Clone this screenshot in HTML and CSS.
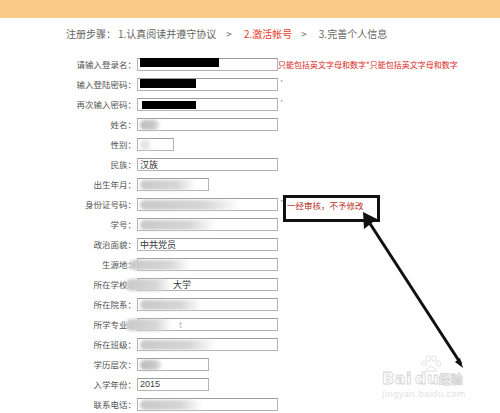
FILE: index.html
```html
<!DOCTYPE html>
<html lang="zh-CN">
<head>
<meta charset="utf-8">
<title>注册步骤</title>
<link rel="stylesheet" href="styles.css">
</head>
<body>
<div class="topbar"></div>
<div class="steps">
  <span class="step-title">注册步骤：</span>
  <span>1.认真阅读并遵守协议</span>
  <span class="sep">&gt;</span>
  <span class="cur">2.激活帐号</span>
  <span class="sep">&gt;</span>
  <span>3.完善个人信息</span>
</div>
<div class="form">
  <div class="row"><span class="label">请输入登录名：</span><span class="field"><i class="black b1"></i></span><span class="msg">只能包括英文字母和数字*只能包括英文字母和数字</span></div>
  <div class="row"><span class="label">输入登陆密码：</span><span class="field"><i class="black b2"></i></span><span class="star">*</span></div>
  <div class="row"><span class="label">再次输入密码：</span><span class="field"><i class="black b3"></i></span><span class="star">*</span></div>
  <div class="row"><span class="label">姓名：</span><span class="field"><i class="blur dark w20"></i></span></div>
  <div class="row"><span class="label">性别：</span><span class="field tiny"><i class="blur light w12"></i></span></div>
  <div class="row"><span class="label">民族：</span><span class="field">汉族</span></div>
  <div class="row"><span class="label">出生年月：</span><span class="field short"><i class="blur w56"></i></span></div>
  <div class="row"><span class="label">身份证号码：</span><span class="field"><i class="blur w100"></i></span><span class="star">*</span></div>
  <div class="row"><span class="label">学号：</span><span class="field"><i class="blur w76"></i></span></div>
  <div class="row"><span class="label">政治面貌：</span><span class="field">中共党员</span></div>
  <div class="row"><span class="label">生源地：</span><span class="field"><i class="blur over w62"></i></span></div>
  <div class="row"><span class="label">所在学校：</span><span class="field"><i class="blur over2 w46"></i><span class="after-blur">大学</span></span></div>
  <div class="row"><span class="label">所在院系：</span><span class="field"><i class="blur w62"></i></span></div>
  <div class="row"><span class="label">所学专业：</span><span class="field"><i class="blur over2 w46"></i><span class="after-blur faint">t</span></span></div>
  <div class="row"><span class="label">所在班级：</span><span class="field"><i class="blur w76"></i></span></div>
  <div class="row"><span class="label">学历层次：</span><span class="field short"><i class="blur dark w22"></i></span></div>
  <div class="row"><span class="label">入学年份：</span><span class="field short num">2015</span></div>
  <div class="row"><span class="label">联系电话：</span><span class="field"><i class="blur w62"></i></span></div>
</div>

<div class="callout">一经审核，不予修改</div>

<svg class="arrow" width="500" height="413" viewBox="0 0 500 413">
  <line x1="461" y1="364" x2="367" y2="219" stroke="#111" stroke-width="3"/>
  <polygon points="363,212 364,229 377,219" fill="#111"/>
  <polygon points="463,368 455,362 460,358" fill="#111"/>
</svg>

<div class="watermark">
  <svg class="paw" width="24" height="17" viewBox="0 0 24 17">
    <g fill="#fff" stroke="#d8d8d8" stroke-width="0.8">
      <ellipse cx="5" cy="8.5" rx="2.2" ry="2.7"/>
      <ellipse cx="9.5" cy="3.5" rx="2.2" ry="2.7"/>
      <ellipse cx="15" cy="3.5" rx="2.2" ry="2.7"/>
      <ellipse cx="19.5" cy="8.5" rx="2.2" ry="2.7"/>
      <path d="M7 16 Q12 7 17.5 16 Z"/>
    </g>
  </svg>
  <div class="wm-main"><span>Bai</span><span class="du">du</span><span class="jy">经验</span></div>
  <div class="wm-url">jingyan.baidu.com</div>
</div>
</body>
</html>
```
FILE: styles.css
```css
html, body {
  margin: 0;
  padding: 0;
}
body {
  position: relative;
  width: 500px;
  height: 413px;
  overflow: hidden;
  background: #fff;
  font-family: "Noto Sans CJK SC", "Microsoft YaHei", sans-serif;
}
.topbar {
  height: 18px;
  background: #fbca89;
}
.steps {
  display: flex;
  align-items: center;
  height: 30px;
  padding-left: 66px;
  font-size: 10px;
  color: #666;
  white-space: nowrap;
}
.step-title {
  margin-right: 2px;
}
.sep {
  margin: 0 12px 0 10px;
}
.cur {
  color: #e8402c;
  margin-right: -1px;
}
.form {
  padding-top: 10px;
}
.row {
  display: flex;
  align-items: flex-start;
  height: 20px;
}
.label {
  width: 136px;
  margin-right: 1px;
  text-align: right;
  font-size: 8.5px;
  line-height: 13px;
  color: #555;
  white-space: nowrap;
}
.field {
  position: relative;
  display: flex;
  align-items: center;
  box-sizing: border-box;
  width: 141px;
  height: 13px;
  padding-left: 2px;
  border: 1px solid #b4b4b4;
  border-top-color: #9c9c9c;
  background: #fff;
  font-size: 9px;
  line-height: 11px;
  color: #333;
  white-space: nowrap;
}
.field.short {
  width: 72px;
}
.field.tiny {
  width: 37px;
}
.field.num {
  font-family: "Liberation Sans", Arial, sans-serif;
  font-size: 9px;
  color: #444;
}
.msg {
  font-size: 8px;
  line-height: 13px;
  color: #d8271b;
  white-space: nowrap;
}
.star {
  margin-left: 2px;
  font-size: 7px;
  line-height: 9px;
  color: #999;
}
.black {
  position: absolute;
  background: #000;
  height: 9px;
}
.b1 { left: 2px; top: -1px; width: 79px; }
.b2 { left: 2px; top: 0; width: 56px; }
.b3 { left: 4px; top: 2px; width: 54px; height: 8px; }
.blur {
  display: inline-block;
  height: 10px;
  border-radius: 5px;
  background: linear-gradient(to right, #c9c9c9, #d6d6d6 65%, rgba(225, 225, 225, 0));
  filter: blur(1.6px);
  flex: none;
}
.blur.dark {
  background: linear-gradient(to right, #bdbdbd, #c8c8c8 70%, rgba(210, 210, 210, 0.3));
}
.blur.light {
  background: linear-gradient(to right, #e0e0e0, #e8e8e8 70%, rgba(235, 235, 235, 0));
}
.blur.over {
  position: absolute;
  left: -9px;
  top: 1px;
}
.blur.over2 {
  position: absolute;
  left: -12px;
  top: 0;
  height: 12px;
}
.after-blur {
  margin-left: 33px;
}
.after-blur.faint {
  margin-left: 39px;
  color: #bbb;
}
.w12 { width: 12px; }
.w20 { width: 20px; }
.w22 { width: 22px; }
.w46 { width: 46px; }
.w56 { width: 56px; }
.w62 { width: 62px; }
.w76 { width: 76px; }
.w100 { width: 100px; }
.callout {
  position: absolute;
  left: 283px;
  top: 195px;
  box-sizing: border-box;
  width: 97px;
  height: 27px;
  padding: 1px 0 0 1px;
  border: 3px solid #111;
  background: #fff;
  font-size: 8.5px;
  line-height: 12px;
  color: #b8321f;
  white-space: nowrap;
}
.arrow {
  position: absolute;
  left: 0;
  top: 0;
  pointer-events: none;
}
.watermark {
  position: absolute;
  left: 382px;
  top: 353px;
  width: 92px;
  text-align: left;
}
.paw {
  position: absolute;
  left: 37px;
  top: 2px;
}
.wm-main {
  margin-top: 17px;
  font-family: "DejaVu Sans", sans-serif;
  font-weight: bold;
  font-size: 16px;
  line-height: 17px;
  color: #fff;
  -webkit-text-stroke: 0.8px #d4d4d4;
  letter-spacing: 0.5px;
  white-space: nowrap;
}
.wm-main .du {
  margin-left: 3px;
}
.wm-main .jy {
  font-family: "Noto Sans CJK SC", sans-serif;
  font-size: 12px;
  letter-spacing: 0;
}
.wm-url {
  margin-top: 2px;
  font-family: "DejaVu Sans", sans-serif;
  font-size: 8.5px;
  line-height: 10px;
  color: #e2e2e2;
  letter-spacing: 0.3px;
  white-space: nowrap;
}
```
